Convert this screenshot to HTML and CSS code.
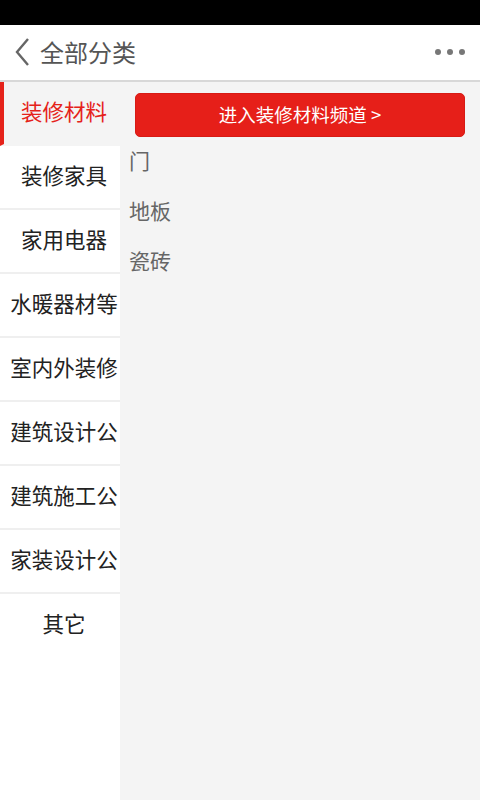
FILE: index.html
```html
<!DOCTYPE html>
<html lang="zh-CN">
<head>
<meta charset="utf-8">
<title>全部分类</title>
<link rel="stylesheet" href="styles.css">
</head>
<body>
<div class="app">
  <div class="status"></div>
  <header class="header">
    <svg class="back" width="20" height="30" viewBox="0 0 20 30"><polyline points="15,2 4,15 15,28" fill="none" stroke="#666" stroke-width="2.4"/></svg>
    <h1 class="title">全部分类</h1>
    <div class="more"><span></span><span></span><span></span></div>
  </header>
  <div class="main">
    <ul class="side">
      <li class="side-item active">装修材料</li>
      <li class="side-item">装修家具</li>
      <li class="side-item">家用电器</li>
      <li class="side-item">水暖器材等</li>
      <li class="side-item">室内外装修</li>
      <li class="side-item">建筑设计公</li>
      <li class="side-item">建筑施工公</li>
      <li class="side-item">家装设计公</li>
      <li class="side-item last">其它</li>
    </ul>
    <div class="content">
      <a class="channel">进入装修材料频道 &gt;</a>
      <ul class="subs">
        <li>门</li>
        <li>地板</li>
        <li>瓷砖</li>
      </ul>
    </div>
  </div>
</div>
</body>
</html>
```
FILE: styles.css
```css
* { box-sizing: border-box; }
html, body { margin: 0; padding: 0; }
body {
  width: 480px;
  height: 800px;
  overflow: hidden;
  font-family: "Noto Sans CJK SC", "Noto Sans", sans-serif;
  background: #f4f4f4;
}
.app { display: flex; flex-direction: column; height: 800px; }
.status { height: 25px; background: #000; flex: none; }
.header {
  height: 57px;
  flex: none;
  background: #fff;
  border-bottom: 2px solid #d8d8d8;
  display: flex;
  align-items: center;
  padding: 0 14px 2px 13px;
}
.back { display: block; margin-right: 7px; }
.title {
  margin: 0;
  font-size: 24px;
  font-weight: normal;
  color: #555;
  flex: 1;
  line-height: 1;
}
.more { display: flex; gap: 6px; margin-right: 1px; }
.more span { width: 6px; height: 6px; border-radius: 50%; background: #777; }
.main { flex: 1; display: flex; min-height: 0; }
.side {
  list-style: none;
  margin: 0;
  padding: 0;
  width: 120px;
  flex: none;
  background: #fff;
}
.side-item {
  height: 64px;
  border-bottom: 2px solid #efefef;
  display: flex;
  align-items: center;
  justify-content: center;
  padding: 0 0 5px 8px;
  font-size: 21.5px;
  color: #222;
  white-space: nowrap;
  overflow: hidden;
}
.side-item.last { border-bottom-color: #fff; }
.side-item.active {
  background: #f4f4f4;
  color: #e5221a;
  border-left: 4px solid #e5221a;
  border-bottom-color: #f4f4f4;
  padding-left: 4px;
}
.content { flex: 1; background: #f4f4f4; }
.channel {
  display: flex;
  align-items: center;
  justify-content: center;
  height: 44px;
  margin: 11px 15px 0;
  padding-bottom: 2px;
  background: #e61f19;
  border: 1px solid #d71b15;
  border-radius: 5px;
  color: #fff;
  font-size: 18.5px;
}
.subs { list-style: none; margin: 0; padding: 0 0 0 9px; }
.subs li { line-height: 46px; font-size: 21px; color: #666; height: 50px; }
```
